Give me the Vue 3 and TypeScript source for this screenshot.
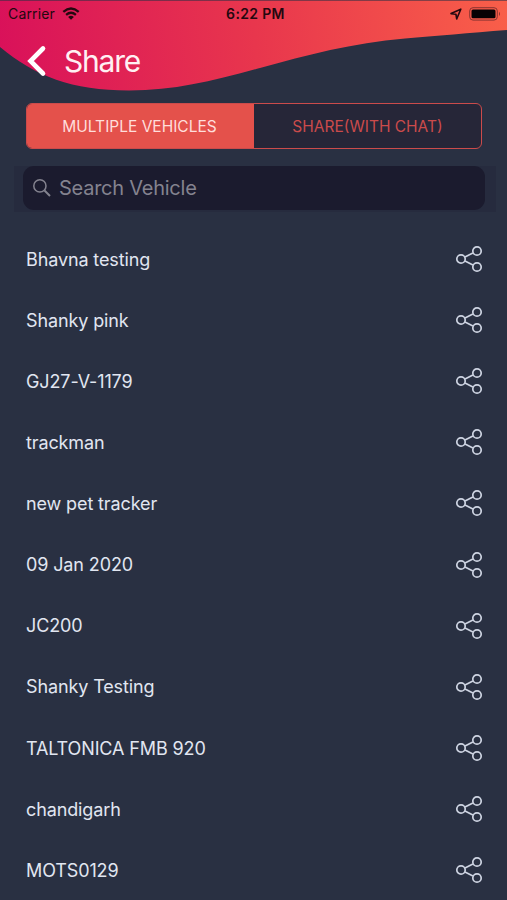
<script setup lang="ts">
import { ref } from 'vue'

type Tab = 'vehicles' | 'chat'

const activeTab = ref<Tab>('vehicles')
const query = ref('')
const vehicles: string[] = [
  'Bhavna testing',
  'Shanky pink',
  'GJ27-V-1179',
  'trackman',
  'new pet tracker',
  '09 Jan 2020',
  'JC200',
  'Shanky Testing',
  'TALTONICA FMB 920',
  'chandigarh',
  'MOTS0129',
]
</script>

<template>
  <main class="screen">
    <header class="header">
      <svg class="wave" viewBox="0 0 507 96" aria-hidden="true">
        <defs>
          <linearGradient id="wave-fill" gradientUnits="userSpaceOnUse" x1="0" y1="60" x2="507" y2="0">
            <stop offset="0" stop-color="#d9115a" />
            <stop offset="0.5" stop-color="#e8364d" />
            <stop offset="1" stop-color="#f95f49" />
          </linearGradient>
        </defs>
        <path d="M0 0H507V30C470 33 435 36 405 38.500C352 43 307 55 260 68C213 81 175 90.500 129 90.500C72 90.500 35 76 0 47Z" fill="url(#wave-fill)" />
        <path d="M0 .5H507" stroke="#293043" stroke-opacity=".55" />
      </svg>
      <div class="status">
        <div class="status-left">
          <span class="carrier">Carrier</span>
          <svg class="wifi" viewBox="0 0 18 13" aria-hidden="true">
            <path d="M1.300 4.900Q9 -1.900 16.700 4.900M4.100 7.900Q9 3.600 13.900 7.900" fill="none" stroke="#24080f" stroke-width="2.200" />
            <path d="M6.100 9.900Q9 7.500 11.900 9.900L9 12.800Z" fill="#24080f" />
          </svg>
        </div>
        <span class="time">6:22 PM</span>
        <div class="status-right">
          <svg class="location" viewBox="0 0 12 12" aria-hidden="true">
            <path d="M1 5.600L10.800 1.200L6.700 10.900L5.900 6.200Z" fill="none" stroke="#24080f" stroke-width="1.600" stroke-linejoin="round" />
          </svg>
          <svg class="battery" viewBox="0 0 33 14" aria-hidden="true">
            <rect x=".7" y=".7" width="27.600" height="12.400" rx="3.300" fill="none" stroke="#8a3431" stroke-width="1" />
            <rect x="2.500" y="2.500" width="24" height="8.800" rx="1.500" fill="#080204" />
            <path d="M30 4.700Q32 6.900 30 9Z" fill="#8a3431" />
          </svg>
        </div>
      </div>
      <div class="title-bar">
        <button class="back" aria-label="Back">
          <svg viewBox="0 0 20 32" aria-hidden="true">
            <path d="M16 3.500L3.500 16L16 28.500" fill="none" stroke="#fff" stroke-width="4.600" stroke-linecap="round" stroke-linejoin="miter" />
          </svg>
        </button>
        <h1>Share</h1>
      </div>
    </header>

    <nav class="tabs">
      <button :class="{ active: activeTab === 'vehicles' }" @click="activeTab = 'vehicles'">MULTIPLE VEHICLES</button>
      <button :class="{ active: activeTab === 'chat' }" @click="activeTab = 'chat'">SHARE(WITH CHAT)</button>
    </nav>

    <div class="search-wrap">
      <label class="search">
        <svg viewBox="0 0 20 20" aria-hidden="true">
          <circle cx="7.900" cy="7.900" r="6.100" fill="none" stroke="#84838f" stroke-width="1.500" />
          <path d="M12.500 12.500L18 18" stroke="#84838f" stroke-width="1.900" />
        </svg>
        <input v-model="query" type="text" placeholder="Search Vehicle" />
      </label>
    </div>

    <ul class="list">
      <li v-for="name in vehicles" :key="name">
        <span class="name">{{ name }}</span>
        <svg class="share" viewBox="0 0 28 28" aria-hidden="true">
          <g fill="none" stroke="#ced4e2" stroke-width="1.700">
            <path d="M10 12L17.900 7.900M10 16L17.900 20.100" />
            <circle cx="6" cy="14" r="4.200" />
            <circle cx="22" cy="6" r="4.200" />
            <circle cx="22" cy="22" r="4.200" />
          </g>
        </svg>
      </li>
    </ul>
  </main>
</template>

<style>
body {
  margin: 0;
  background: #293042;
}
</style>

<style scoped>
.screen {
  box-sizing: border-box;
  width: 507px;
  height: 900px;
  overflow: hidden;
  background: #293042;
  font-family: Inter, "Liberation Sans", sans-serif;
}

.header {
  position: relative;
  height: 103px;
}

.wave {
  position: absolute;
  inset: 0 auto auto 0;
  display: block;
  width: 507px;
  height: 96px;
}

.status {
  position: relative;
  display: grid;
  grid-template-columns: 1fr auto 1fr;
  align-items: center;
  height: 27px;
  padding: 0 5px 0 8px;
  color: #24080f;
  font-size: 14px;
  line-height: 27px;
}

.status-left,
.status-right {
  display: flex;
  align-items: center;
}

.status-left {
  gap: 7px;
}

.carrier {
  letter-spacing: 0.15px;
}

.status-right {
  justify-content: flex-end;
  gap: 7px;
}

.wifi {
  width: 18px;
  height: 13px;
}

.time {
  padding-left: 1px;
  font-weight: 600;
  letter-spacing: 0.35px;
}

.location {
  width: 12px;
  height: 12px;
}

.battery {
  width: 33px;
  height: 14px;
}

.title-bar {
  position: relative;
  display: flex;
  align-items: center;
  gap: 17px;
  height: 68px;
  padding-left: 27px;
}

button {
  margin: 0;
  padding: 0;
  border: 0;
  background: none;
  font: inherit;
}

.back {
  display: flex;
}

.back svg {
  width: 20px;
  height: 32px;
}

h1 {
  margin: 0;
  color: #fff0f3;
  font-size: 30px;
  font-weight: 400;
  line-height: 40px;
  letter-spacing: -1.2px;
}

.tabs {
  box-sizing: border-box;
  display: grid;
  grid-template-columns: 1fr 1fr;
  width: 456px;
  height: 46px;
  margin-left: 26px;
  overflow: hidden;
  border: 1px solid #cb4b4b;
  border-radius: 6px;
  background: #262638;
}

.tabs button {
  color: #cb4b4b;
  font-size: 15.500px;
  white-space: nowrap;
}

.tabs button.active {
  padding-right: 2px;
  background: #e4514b;
  color: #ffdedb;
}

.search-wrap {
  box-sizing: border-box;
  width: 482px;
  height: 46px;
  margin: 17px 0 0 14px;
  padding: 0 11px 2px 9px;
  background: #262b3e;
}

.search {
  box-sizing: border-box;
  display: flex;
  align-items: center;
  gap: 7px;
  height: 44px;
  padding-left: 9px;
  border-radius: 11px;
  background: #1b1b2e;
}

.search svg {
  width: 20px;
  height: 20px;
}

.search input {
  flex: 1;
  min-width: 0;
  padding: 0;
  border: 0;
  outline: 0;
  background: none;
  color: #ced4e2;
  font: 400 20px/40px Inter, "Liberation Sans", sans-serif;
  letter-spacing: -0.250px;
}

.search input::placeholder {
  color: #84838f;
  opacity: 1;
}

.list {
  display: flex;
  flex-direction: column;
  margin: 16.500px 0 0;
  padding: 0;
  list-style: none;
}

.list li {
  box-sizing: border-box;
  display: flex;
  flex: none;
  align-items: center;
  justify-content: space-between;
  height: 61.100px;
  padding: 0 24px 0 26px;
}

.name {
  padding-top: 1.500px;
  color: #e1e6f1;
  font-size: 18px;
  line-height: 28px;
  letter-spacing: -0.120px;
}

.share {
  width: 28px;
  height: 28px;
}
</style>
